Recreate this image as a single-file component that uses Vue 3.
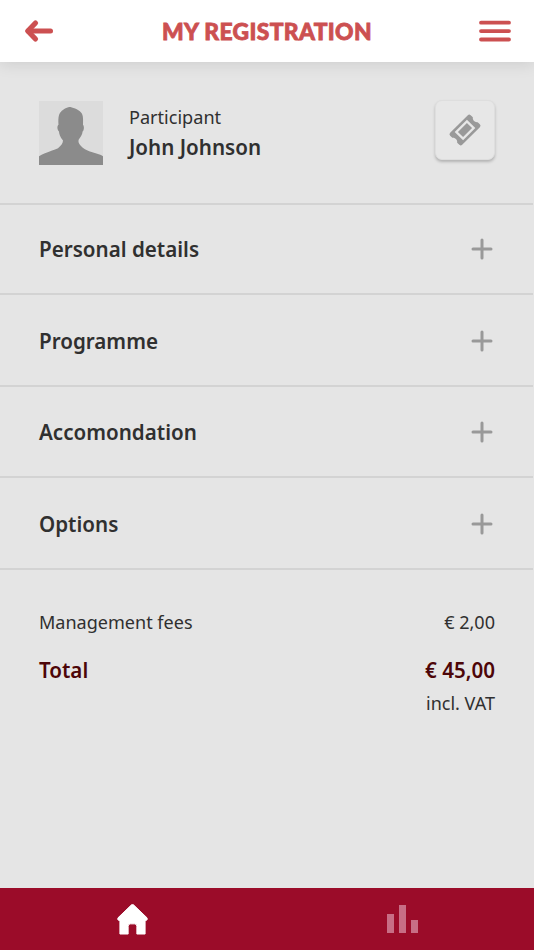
<script setup>
const sections = ['Personal details', 'Programme', 'Accomondation', 'Options']
</script>

<template>
  <div class="screen">
    <header class="topbar">
      <svg class="back" width="30" height="24" viewBox="0 0 30 24" fill="none" stroke="#cc5051" stroke-linecap="round" stroke-linejoin="round">
        <path d="M11.500 4 3.800 12 11.500 20" stroke-width="5.200" />
        <path d="M4 12H26.500" stroke-width="5" />
      </svg>
      <h1>MY REGISTRATION</h1>
      <svg class="menu" width="32" height="22" viewBox="0 0 32 22" stroke="#cc5051" stroke-width="3.8" stroke-linecap="round">
        <path d="M2 2.700H30M2 11.100H30M2 19.500H30" />
      </svg>
    </header>

    <main>
      <section class="participant">
        <svg class="avatar" width="64" height="64" viewBox="0 0 64 65" preserveAspectRatio="none">
          <path fill="#dcdcdc" d="M0 0h64v65H0z" />
          <path fill="#8b8b8b" d="M0 65V56C7 52 15 50 19 48C22 45 24 43 24 40C21 37 20 33 20 31C18 29 18 25 19.500 24C19 16 20 13 22 11C24 8 29 6 31.500 6C35 7 41 9 43 13C44.500 16 44 21 44 24C45.500 26 45 30 43.500 31C43.500 35 40 38 39.500 40C39 43 42 46 46 49C51 52 59 53 64 56V65Z" />
        </svg>
        <div class="identity">
          <span class="role">Participant</span>
          <strong>John Johnson</strong>
        </div>
        <button class="ticket" aria-label="Ticket">
          <svg width="34" height="34" viewBox="0 0 34 34">
            <g transform="rotate(-45 17 17)">
              <path fill="#999" d="M4.500 8.500H29.500A2 2 0 0 1 31.500 10.500V13.600C29.200 15.200 29.200 18.800 31.500 20.400V23.500A2 2 0 0 1 29.500 25.500H4.500A2 2 0 0 1 2.500 23.500V20.400C4.800 18.800 4.800 15.200 2.500 13.600V10.500A2 2 0 0 1 4.500 8.500Z" />
              <rect x="9.500" y="12.200" width="15" height="9.600" fill="#999" stroke="#e7e7e7" stroke-width="2.300" />
            </g>
          </svg>
        </button>
      </section>

      <section v-for="name in sections" :key="name" class="row">
        <h2>{{ name }}</h2>
        <svg width="22" height="22" viewBox="0 0 22 22" stroke="#999" stroke-width="3" stroke-linecap="round">
          <path d="M2 11H20M11 2V20" />
        </svg>
      </section>

      <section class="costs">
        <div class="cost"><span class="fees">Management fees</span><span class="amount">€ 2,00</span></div>
        <div class="cost total"><span>Total</span><span class="sum">€ 45,00</span></div>
        <div class="vat">incl. VAT</div>
      </section>
    </main>

    <nav class="tabs">
      <svg class="home" width="31" height="31" viewBox="0 0 32 32">
        <path fill="#fff" stroke="#fff" stroke-linejoin="round" d="M15 .8Q16 0 17 .8L31 14.300Q32 16.500 30 17H29V31H20.500V23Q20.500 20.500 18 20.500H14Q11.500 20.500 11.500 23V31H3V17H2Q0 16.500 1 14.300Z" />
      </svg>
      <svg class="stats" width="31" height="28" viewBox="0 0 31 28">
        <path fill="#c86e85" d="M0 9h7v19H0zM12 0h7v28h-7zM24 15h7v13h-7z" />
      </svg>
    </nav>
  </div>
</template>

<style>
body { margin: 0; }
</style>

<style scoped>
.screen {
  width: 534px;
  height: 950px;
  display: flex;
  flex-direction: column;
  background: #e5e5e5;
  color: #303030;
  font-family: "Noto Sans", sans-serif;
}
.topbar {
  box-sizing: border-box;
  height: 62px;
  flex: none;
  display: flex;
  align-items: center;
  justify-content: space-between;
  padding: 0 23px 0 24px;
  background: #fff;
  box-shadow: 0 1px 16px rgba(0, 0, 0, .12);
}
h1 {
  margin: 0 0 0 1px;
  font: 900 22.800px/30px Lato, sans-serif;
  letter-spacing: .36px;
  color: #cc5051;
  -webkit-text-stroke: .8px #cc5051;
  white-space: nowrap;
}
main { flex: 1; }
.participant {
  box-sizing: border-box;
  width: 533px;
  height: 143px;
  display: flex;
  align-items: flex-start;
  padding: 38px 38px 0 39px;
  border-bottom: 2px solid #d3d3d3;
}
.avatar { margin-top: 1px; }
.identity {
  flex: 1;
  display: flex;
  flex-direction: column;
  margin: 3px 0 0 26px;
}
.role { font-size: 18.100px; line-height: 28px; }
strong { font-size: 20.600px; line-height: 32px; font-weight: 600; }
.ticket {
  width: 60px;
  height: 60px;
  display: grid;
  place-items: center;
  padding: 0;
  border: 1px solid #dedede;
  border-radius: 7px;
  background: #e7e7e7;
  box-shadow: 0 2px 3px rgba(0, 0, 0, .22);
}
.row {
  box-sizing: border-box;
  width: 533px;
  height: 91.500px;
  display: flex;
  align-items: center;
  justify-content: space-between;
  padding: 2px 40px 0 39px;
  border-bottom: 2px solid #d3d3d3;
}
.participant + .row { height: 90px; padding-top: 0; }
h2 { margin: 0; font-size: 20.600px; line-height: 30px; font-weight: 600; }
.costs { padding: 37px 39px 0; }
.cost {
  height: 30px;
  display: flex;
  align-items: center;
  justify-content: space-between;
  font-size: 18.050px;
}
.total {
  margin-top: 18px;
  font-size: 20.600px;
  font-weight: 600;
  color: #4d0508;
}
.vat { margin-top: 3px; font-size: 18.050px; line-height: 30px; text-align: right; }
.tabs {
  height: 62px;
  flex: none;
  display: grid;
  grid-template-columns: 1fr 1fr;
  place-items: center;
  background: #9b0c29;
}
.home { margin-right: 2px; }
.stats { margin-left: 3px; }
</style>
